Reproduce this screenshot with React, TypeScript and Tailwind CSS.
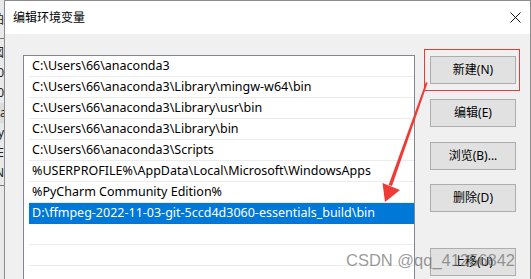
const PATHS = [
  'C:\\Users\\66\\anaconda3',
  'C:\\Users\\66\\anaconda3\\Library\\mingw-w64\\bin',
  'C:\\Users\\66\\anaconda3\\Library\\usr\\bin',
  'C:\\Users\\66\\anaconda3\\Library\\bin',
  'C:\\Users\\66\\anaconda3\\Scripts',
  '%USERPROFILE%\\AppData\\Local\\Microsoft\\WindowsApps',
  '%PyCharm Community Edition%',
  'D:\\ffmpeg-2022-11-03-git-5ccd4d3060-essentials_build\\bin',
  '',
  '',
  '',
];

const SELECTED = 7;

const FONT = "font-['Noto_Sans','Noto_Sans_CJK_SC',sans-serif]";

function DialogButton({ label, className = '' }: { label: string; className?: string }) {
  return (
    <div
      className={`flex h-[28px] w-[86px] items-center justify-center border border-[#adadad] bg-[#e1e1e1] text-[12px] text-black ${className}`}
    >
      {label}
    </div>
  );
}

export default function App() {
  return (
    <div className={`relative flex h-[279px] w-[531px] overflow-hidden bg-[#f0f0f0] ${FONT}`}>
      {/* edge of the window behind */}
      <div className="flex w-[4px] shrink-0 flex-col items-end overflow-hidden bg-[#e9e9e9] text-[12px] leading-[20px] text-[#222]">
        <div className="mt-[10px] whitespace-nowrap">拍</div>
        <div className="mt-[8px] h-px w-full bg-[#777]" />
        <div className="mt-[4px] whitespace-nowrap">図</div>
        <div className="whitespace-nowrap">0</div>
        <div className="whitespace-nowrap">0</div>
        <div className="w-full bg-[#dcdcdc] whitespace-nowrap">a</div>
        <div className="whitespace-nowrap">y</div>
        <div className="whitespace-nowrap">E</div>
        <div className="whitespace-nowrap">N</div>
        <div className="mt-[2px] h-px w-full bg-[#777]" />
      </div>

      {/* dialog */}
      <div className="flex min-w-0 flex-1 flex-col border-x border-t border-[#8c8c8c]">
        <div className="flex h-[33px] shrink-0 items-center justify-between bg-white pl-[8px] pr-[9px]">
          <span className="text-[12px] text-black">编辑环境变量</span>
          <svg width="11" height="11" viewBox="0 0 11 11" className="mb-[1px]">
            <path d="M0.5 0.5L10.5 10.5M10.5 0.5L0.5 10.5" stroke="#111" strokeWidth="1" />
          </svg>
        </div>

        <div className="flex flex-1 pl-[18px] pt-[21px]">
          <div className="h-[240px] w-[392px] shrink-0 border border-[#828790] bg-white pl-[5px] pr-[0px]">
            {PATHS.map((p, i) => (
              <div
                key={i}
                className={`flex h-[21px] items-center border-b pl-[3px] text-[12.5px] whitespace-nowrap ${
                  i === SELECTED
                    ? 'border-[#0078d7] bg-[#0078d7] text-white'
                    : 'border-[#ececec] text-black'
                }`}
              >
                {p}
              </div>
            ))}
          </div>

          <div className="ml-[15px] flex flex-col pt-[1px]">
            <DialogButton label="新建(N)" />
            <DialogButton label="编辑(E)" className="mt-[15px]" />
            <DialogButton label="浏览(B)..." className="mt-[15px]" />
            <DialogButton label="删除(D)" className="mt-[14px]" />
            <DialogButton label="上移(U)" className="mt-[36px]" />
          </div>
        </div>
      </div>

      {/* annotation: red box + arrow */}
      <div className="absolute left-[424px] top-[49px] h-[42px] w-[96px] border border-[#e53c3c]" />
      <svg className="absolute left-0 top-0" width="531" height="279" viewBox="0 0 531 279">
        <polygon points="426,82 427.6,83 392,186 388.6,185" fill="#ee3b36" />
        <polygon points="385,202 382.5,183 400,190" fill="#ee3b36" />
      </svg>

      {/* watermark */}
      <div className="absolute left-[346px] top-[250px] font-['Liberation_Sans',Arial,sans-serif] text-[16.5px] leading-[20px] text-[#6e6e6e]/70">
        CSDN @qq_41256842
      </div>
    </div>
  );
}
